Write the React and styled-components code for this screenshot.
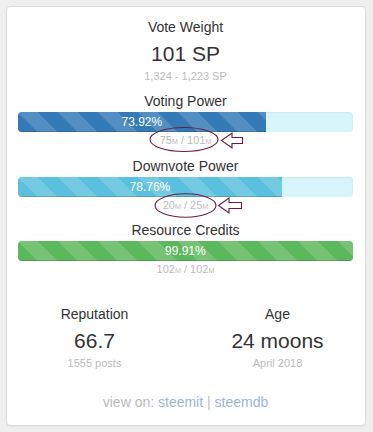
import React from "react";
import styled, { createGlobalStyle } from "styled-components";

const GlobalStyle = createGlobalStyle`
 html, body {
  margin: 0;
  padding: 0;
  background: #efefef;
 }
 body {
  padding: 6px;
  font-family: "Liberation Sans", Arial, sans-serif;
  color: #333;
 }
`;

const Card = styled.div`
 width: 360px;
 box-sizing: border-box;
 background: #fff;
 border: 1px solid #dcdcdc;
 border-radius: 4px;
 box-shadow: 0 1px 1px rgba(0, 0, 0, 0.04);
 padding: 10px 12px 13px 11px;
 text-align: center;
`;

const Title = styled.div`
 font-size: 14px;
 line-height: 20px;
 color: #333;
`;

const Big = styled.div`
 font-size: 21px;
 line-height: 28px;
 margin-top: 3px;
 color: #333;
`;

const Sub = styled.div`
 position: relative;
 font-size: 11px;
 line-height: 16px;
 color: #bbb;

 small {
  font-size: 65%;
  line-height: 0;
 }
`;

const Meters = styled.div`
 display: flex;
 flex-direction: column;
 gap: 7.5px;
 margin-top: 7px;
`;

const Track = styled.div`
 height: 20px;
 margin-top: 1px;
 border-radius: 4px;
 overflow: hidden;
 background: #d9f5fc;
 box-shadow: inset 0 1px 2px rgba(0, 0, 0, 0.06);
 display: flex;
`;

const Fill = styled.div`
 height: 100%;
 background-color: ${(p) => p.$color};
 background-image: linear-gradient(
  45deg,
  rgba(255, 255, 255, 0.16) 25%,
  transparent 25%,
  transparent 50%,
  rgba(255, 255, 255, 0.16) 50%,
  rgba(255, 255, 255, 0.16) 75%,
  transparent 75%,
  transparent
 );
 background-size: 40px 40px;
 box-shadow: inset 0 -1px 0 rgba(0, 0, 0, 0.15);
 color: #fff;
 font-size: 12px;
 line-height: 20px;
 text-align: center;
`;

const Mark = styled.svg`
 position: absolute;
 left: 50%;
 top: 50%;
 width: 110px;
 height: 30px;
 margin-left: -45px;
 margin-top: -15px;
 overflow: visible;
 pointer-events: none;
`;

const Stats = styled.div`
 display: grid;
 grid-template-columns: 1fr 1fr;
 margin: 27px -16px 0 -15px;
`;

const Footer = styled.div`
 margin-top: 21px;
 font-size: 14px;
 line-height: 20px;
 color: #bbb;

 a {
  color: #9ab8d6;
  text-decoration: none;
 }
`;

const Annotation = ({ ex, ey, rx, ry, tip, head, end }) => (
 <Mark viewBox="-45 -15 110 30">
  <ellipse cx={ex} cy={ey} rx={rx} ry={ry} fill="none" stroke="#6e1c45" strokeWidth="1.1" />
  <polygon
   points={`${tip},0.5 ${head},-7 ${head},-2.5 ${end},-2.5 ${end},3.5 ${head},3.5 ${head},8`}
   fill="none"
   stroke="#6e1c45"
   strokeWidth="1.1"
  />
 </Mark>
);

const Meter = ({ title, pct, color, used, total, note }) => (
 <div>
  <Title>{title}</Title>
  <Track>
   <Fill $color={color} style={{ width: `${pct}%` }}>
    {pct}%
   </Fill>
  </Track>
  <Sub>
   {used}
   <small>M</small> / {total}
   <small>M</small>
   {note && <Annotation {...note} />}
  </Sub>
 </div>
);

const Stat = ({ title, value, sub }) => (
 <div>
  <Title>{title}</Title>
  <Big>{value}</Big>
  <Sub>{sub}</Sub>
 </div>
);

export default function App() {
 return (
  <>
   <GlobalStyle />
   <Card>
    <Stat title="Vote Weight" value="101 SP" sub="1,324 - 1,223 SP" />
    <Meters>
     <Meter
      title="Voting Power"
      pct="73.92"
      color="#337ab7"
      used="75"
      total="101"
      note={{ ex: -2, ey: -0.5, rx: 34, ry: 12, tip: 35.5, head: 46, end: 56.5 }}
     />
     <Meter
      title="Downvote Power"
      pct="78.76"
      color="#5bc0de"
      used="20"
      total="25"
      note={{ ex: -0.5, ey: 0.5, rx: 30.5, ry: 11.7, tip: 32.5, head: 43, end: 55.5 }}
     />
     <Meter title="Resource Credits" pct="99.91" color="#5cb85c" used="102" total="102" />
    </Meters>
    <Stats>
     <Stat title="Reputation" value="66.7" sub="1555 posts" />
     <Stat title="Age" value="24 moons" sub="April 2018" />
    </Stats>
    <Footer>
     view on: <a href="#steemit">steemit</a> | <a href="#steemdb">steemdb</a>
    </Footer>
   </Card>
  </>
 );
}
